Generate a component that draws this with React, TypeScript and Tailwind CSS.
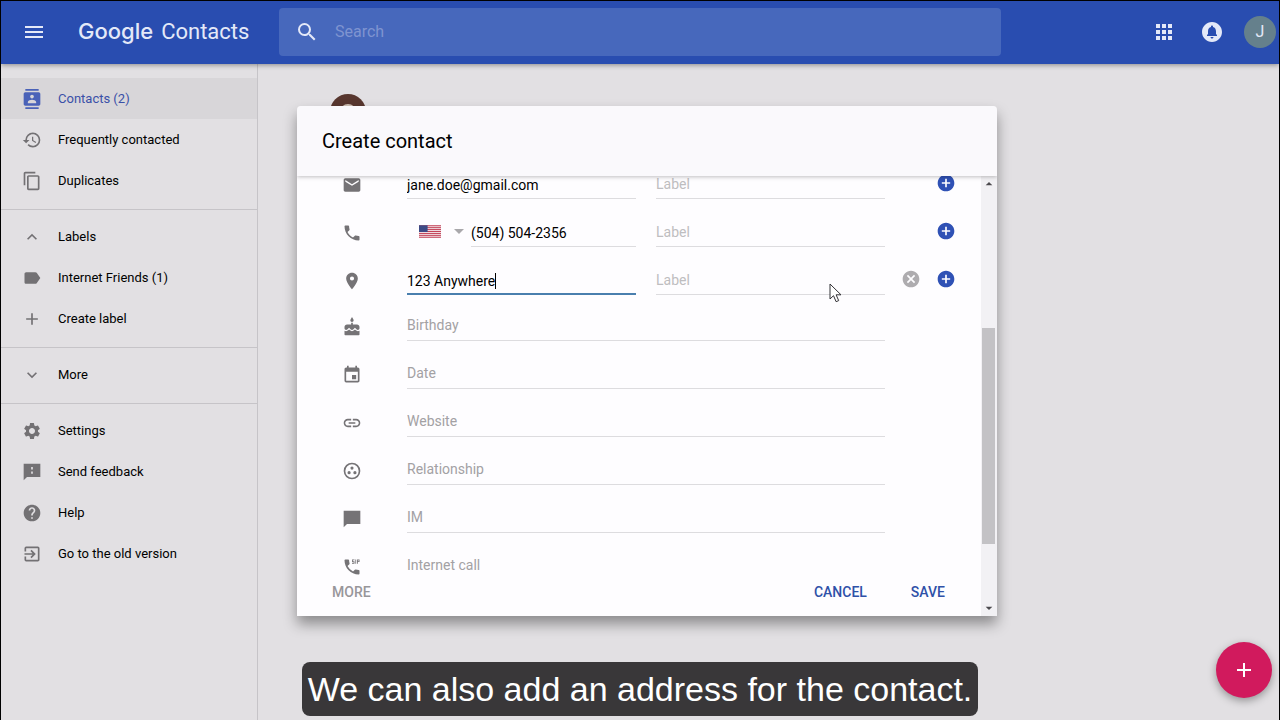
import React from 'react';
import {
  MdMenu, MdSearch, MdApps, MdCircleNotifications, MdContacts, MdHistory, MdContentCopy,
  MdExpandLess, MdExpandMore, MdLabel, MdAdd, MdSettings, MdHelp, MdExitToApp,
  MdEmail, MdPhone, MdPlace, MdCake, MdEvent, MdLink,
  MdDialerSip, MdAddCircle, MdCancel, MdArrowDropDown, MdArrowDropUp
} from 'react-icons/md';

type Item = { icon: React.ReactNode; title: string; active?: boolean };

const FeedbackIcon: React.FC = () => (
  <svg width="20" height="20" viewBox="0 0 24 24" fill="currentColor" aria-hidden="true">
    <path d="M22 2H2v20l4-4h16V2zm-9 12h-2v-2.500h2V14zm0-5h-2V6h2v3z" />
  </svg>
);

const ChatIcon: React.FC = () => (
  <svg width="20" height="20" viewBox="0 0 24 24" fill="currentColor" aria-hidden="true">
    <path d="M22 2H2v20l4-4h16V2z" />
  </svg>
);

const RelationshipIcon: React.FC = () => (
  <svg width="20" height="20" viewBox="0 0 24 24" fill="currentColor" aria-hidden="true">
    <circle cx="12" cy="12" r="9" fill="none" stroke="currentColor" strokeWidth="2" />
    <circle cx="12" cy="8.500" r="1.900" />
    <circle cx="8.500" cy="14" r="1.900" />
    <circle cx="15.500" cy="14" r="1.900" />
  </svg>
);

const menu: Item[][] = [
  [
    { icon: <MdContacts size={20} />, title: 'Contacts (2)', active: true },
    { icon: <MdHistory size={20} />, title: 'Frequently contacted' },
    { icon: <MdContentCopy size={20} />, title: 'Duplicates' }
  ],
  [
    { icon: <MdExpandLess size={20} />, title: 'Labels' },
    { icon: <MdLabel size={20} />, title: 'Internet Friends (1)' },
    { icon: <MdAdd size={20} />, title: 'Create label' }
  ],
  [{ icon: <MdExpandMore size={20} />, title: 'More' }],
  [
    { icon: <MdSettings size={20} />, title: 'Settings' },
    { icon: <FeedbackIcon />, title: 'Send feedback' },
    { icon: <MdHelp size={20} />, title: 'Help' },
    { icon: <MdExitToApp size={20} />, title: 'Go to the old version' }
  ]
];

const details = [
  { icon: <MdCake size={20} />, name: 'Birthday' },
  { icon: <MdEvent size={20} />, name: 'Date' },
  { icon: <MdLink size={20} />, name: 'Website' },
  { icon: <RelationshipIcon />, name: 'Relationship' },
  { icon: <ChatIcon />, name: 'IM' },
  { icon: <MdDialerSip size={20} />, name: 'Internet call' }
];

const Header: React.FC = () => (
  <header className="relative z-10 flex h-[63px] items-center bg-[#294db0] pr-[3px] pb-0.5 text-[#e4e9f8] shadow-[0_1px_5px_rgba(0,0,0,0.4)]">
    <button aria-label="Main menu" className="ml-[21px]">
      <MdMenu size={24} />
    </button>
    <div className="ml-8 flex w-[201px] shrink-0 items-baseline gap-2">
      <span className="font-['Inter',sans-serif] text-[22px] font-medium">Google</span>
      <span className="text-[22px]">Contacts</span>
    </div>
    <label className="flex h-12 w-[722px] min-w-0 items-center rounded-sm bg-[#4768bc] pl-4">
      <MdSearch size={24} />
      <input
        type="search"
        aria-label="Search"
        placeholder="Search"
        className="ml-4 min-w-0 flex-1 bg-transparent text-base outline-none placeholder:text-[#7f94d0]"
      />
    </label>
    <div className="ml-auto flex shrink-0 items-center gap-6">
      <button aria-label="Google apps"><MdApps size={24} /></button>
      <button aria-label="Notifications"><MdCircleNotifications size={24} /></button>
      <button aria-label="Account" className="-ml-1 flex size-8 items-center justify-center rounded-full bg-[#65808c] text-base">
        J
      </button>
    </div>
  </header>
);

const Sidebar: React.FC = () => (
  <nav className="w-[257px] shrink-0 border-r border-[#c6c4c8] pt-2">
    {menu.map((group, index) => (
      <ul key={index} className={index === 0 ? 'pt-[6px] pb-2' : 'border-t border-[#c6c4c8] pt-[6px] pb-2'}>
        {group.map((item) => (
          <li key={item.title}>
            <a
              href="#"
              className={
                item.active
                  ? 'flex h-[41px] items-center gap-4 bg-[#d8d6d9] pl-[21px] text-[13px] text-[#3a50a8]'
                  : 'flex h-[41px] items-center gap-4 pl-[21px] text-[13px] text-black'
              }
            >
              <span className={item.active ? 'text-[#4a62b8]' : 'text-[#737174]'}>{item.icon}</span>
              {item.title}
            </a>
          </li>
        ))}
      </ul>
    ))}
  </nav>
);

const Flag: React.FC = () => (
  <svg width="23" height="13" viewBox="0 0 23 13" aria-hidden="true">
    <rect width="23" height="13" fill="#f3e6ea" />
    {[0, 2, 4, 6, 8, 10, 12].map((y) => (
      <rect key={y} y={y} width="23" height="1" fill="#c03a50" />
    ))}
    <rect width="9" height="7" fill="#3c4a86" />
  </svg>
);

const inputClass =
  'h-7 w-full min-w-0 flex-1 border-b border-[#dddcdf] bg-transparent text-sm text-black outline-none';

type RowProps = { icon: React.ReactNode; children: React.ReactNode; actions?: React.ReactNode; short?: boolean };

const Row: React.FC<RowProps> = ({ icon, children, actions, short }) => (
  <div className={short ? 'flex h-[46px] items-end pl-[45px]' : 'flex h-12 items-end pl-[45px]'}>
    <span className="mr-[45px] pb-1 text-[#757376]">{icon}</span>
    <div className="flex min-w-0 flex-1 items-end gap-5">{children}</div>
    <div className="flex w-24 shrink-0 justify-end gap-[15px] pr-[25px] pb-[6px]">{actions}</div>
  </div>
);

const AddButton: React.FC<{ name: string }> = ({ name }) => (
  <button type="button" aria-label={`Add ${name}`} className="text-[#2f51b5]">
    <MdAddCircle size={20} />
  </button>
);

const LabelInput: React.FC<{ name: string }> = ({ name }) => (
  <input
    aria-label={`${name} label`}
    placeholder="Label"
    className="h-7 w-full min-w-0 flex-1 border-b border-[#dddcdf] bg-transparent pb-0.5 text-sm outline-none placeholder:text-[#bebdc0]"
  />
);

const CreateContact: React.FC = () => (
  <form
    role="dialog"
    aria-labelledby="dialog-title"
    className="flex h-[510px] w-[700px] max-w-full flex-col overflow-hidden rounded-t-sm bg-[#fefdff] shadow-[0_8px_14px_rgba(0,0,0,0.38)]"
  >
    <div className="relative z-10 flex h-[70px] shrink-0 items-center bg-[#faf9fc] pl-[25px] shadow-[0_1px_4px_rgba(0,0,0,0.25)]">
      <h2 id="dialog-title" className="text-xl text-black">Create contact</h2>
    </div>
    <div className="flex min-h-0 flex-1">
      <div className="flex min-w-0 flex-1 flex-col">
        <div className="min-h-0 flex-1 overflow-hidden">
          {/* list is scrolled part way, the email row sits under the title bar */}
          <div className="-mt-[25px]">
            <Row icon={<MdEmail size={20} />} actions={<AddButton name="email" />}>
              <input aria-label="Email" defaultValue="jane.doe@gmail.com" className={inputClass} />
              <LabelInput name="Email" />
            </Row>
            <Row icon={<MdPhone size={20} />} actions={<AddButton name="phone" />}>
              <div className="flex min-w-0 flex-1 items-end">
                <button type="button" aria-label="Country" className="flex h-8 w-16 shrink-0 items-center gap-[6px] pl-3 text-[#a9a8ab]">
                  <Flag />
                  <MdArrowDropDown size={24} className="shrink-0" />
                </button>
                <input aria-label="Phone" defaultValue="(504) 504-2356" className={inputClass} />
              </div>
              <LabelInput name="Phone" />
            </Row>
            <Row
              icon={<MdPlace size={20} />}
              actions={
                <>
                  <button type="button" aria-label="Remove address" className="text-[#aeacaf]">
                    <MdCancel size={20} />
                  </button>
                  <AddButton name="address" />
                </>
              }
            >
              <div className="flex h-7 min-w-0 flex-1 items-center border-b-2 border-[#4a7fae] pt-0.5">
                <input
                  aria-label="Address"
                  defaultValue="123 Anywhere"
                  className="field-sizing-content bg-transparent text-sm text-black outline-none"
                />
                <span className="h-4 w-px bg-black" />
              </div>
              <LabelInput name="Address" />
            </Row>
            {details.map((field, index) => (
              <Row key={field.name} icon={field.icon} short={index === 0}>
                <input
                  aria-label={field.name}
                  placeholder={field.name}
                  className="h-8 w-full border-b border-[#dddcdf] bg-transparent text-sm outline-none placeholder:text-[#a3a1a4]"
                />
              </Row>
            ))}
          </div>
        </div>
        <div className="flex h-10 shrink-0 items-start bg-[#fefdff] pt-[6px] pr-9 pl-[35px] text-sm font-medium text-[#2f51a8]">
          <button type="button" className="mr-auto text-[#98969a]">MORE</button>
          <button type="button" className="mr-11">CANCEL</button>
          <button type="submit">SAVE</button>
        </div>
      </div>
      <div className="flex w-4 shrink-0 flex-col items-center bg-[#f2f1f4] pr-px text-[#4b4a4d]">
        <MdArrowDropUp size={16} className="shrink-0" />
        <div className="mt-[136px] h-[216px] w-[13px] bg-[#c3c2c5]" />
        <MdArrowDropDown size={16} className="mt-auto shrink-0" />
      </div>
    </div>
  </form>
);

const App: React.FC = () => (
  <div className="relative flex min-h-screen flex-col overflow-hidden border-x border-t border-black bg-[#e2e0e3] font-[Roboto,sans-serif]">
    <Header />
    <div className="flex flex-1">
      <Sidebar />
      <main className="flex-1 pt-[30px] pl-[72px]">
        <div className="size-9 rounded-full bg-[#58372f] pt-[10px]">
          <div className="mx-auto size-4 rounded-full bg-[#cfc0b4]" />
        </div>
      </main>
    </div>

    <button
      aria-label="Create contact"
      className="absolute right-[7px] bottom-[22px] flex size-14 items-center justify-center rounded-full bg-[#d11a5d] text-white shadow-[0_3px_8px_rgba(0,0,0,0.35)]"
    >
      <MdAdd size={24} />
    </button>

    <div className="absolute inset-x-0 top-[105px] z-20 flex justify-center pl-[14px]">
      <CreateContact />
    </div>

    <div className="absolute inset-x-0 bottom-1 z-30 flex justify-center">
      <p className="rounded-lg bg-[#393739] px-[6px] font-['Liberation_Sans',sans-serif] text-[34px] leading-[54px] text-white">
        We can also add an address for the contact.
      </p>
    </div>

    {/* mouse pointer */}
    <svg className="absolute top-[282px] left-[828px] z-30" width="13" height="20" viewBox="0 0 13 20" aria-hidden="true">
      <path d="M1 1v15l3.500-3.300 2.600 6 2.600-1.100-2.600-5.800H12z" fill="#fff" stroke="#333236" />
    </svg>
  </div>
);

export default App;
